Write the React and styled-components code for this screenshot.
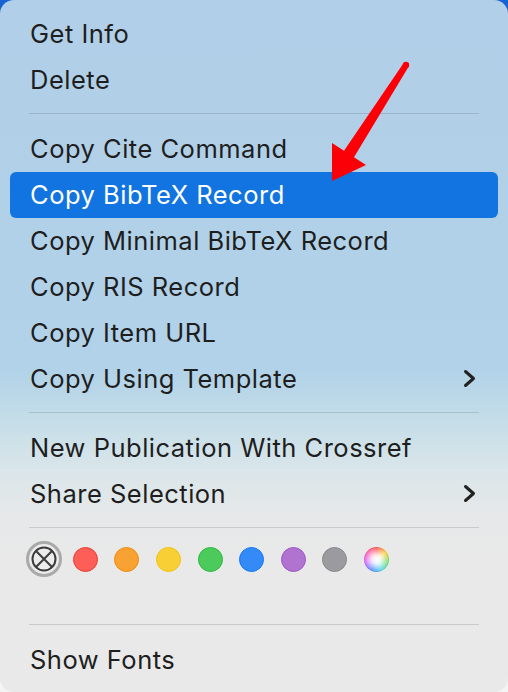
import styled, { createGlobalStyle } from "styled-components";

const GlobalStyle = createGlobalStyle`
  html, body {
    margin: 0;
    padding: 0;
  }
  body {
    width: 508px;
    height: 692px;
    overflow: hidden;
    background: linear-gradient(180deg, #1762d2 0%, #1762d2 50%, #f4f4f4 50%, #f4f4f4 100%);
    font-family: Inter, "Liberation Sans", Arial, sans-serif;
  }
`;

const Menu = styled.div`
  position: relative;
  box-sizing: border-box;
  width: 508px;
  height: 692px;
  padding: 11px 10px 0;
  border-radius: 14px;
  overflow: hidden;
  background: linear-gradient(
    180deg,
    #b1cfe8 0px,
    #b1d2e8 370px,
    #c4dde8 420px,
    #dae6ea 470px,
    #e6e8e9 515px,
    #e9e9e9 560px,
    #e9e9e9 100%
  );
`;

const Item = styled.div`
  height: 46px;
  display: flex;
  align-items: center;
  justify-content: space-between;
  padding: 0 22px 2px 20px;
  box-sizing: border-box;
  border-radius: 6px;
  font-size: 25.5px;
  letter-spacing: 0.5px;
  color: ${(p) => (p.$active ? "#ffffff" : "#1e1e1e")};
  background: ${(p) => (p.$active ? "#1174e0" : "transparent")};
`;

const Separator = styled.div`
  height: 1px;
  margin: 10px 19px 12px;
  background: rgba(0, 0, 0, 0.13);
`;

const SwatchRow = styled.div`
  display: flex;
  align-items: center;
  gap: 5.6px;
  padding: 1px 0 37px 15.7px;
`;

const Cell = styled.div`
  width: 36px;
  height: 36px;
  display: flex;
  align-items: center;
  justify-content: center;
`;

const Swatch = styled.div`
  box-sizing: border-box;
  width: 25px;
  height: 25px;
  border-radius: 50%;
  background: ${(p) => p.$fill};
  border: 1.5px solid ${(p) => p.$edge};
`;

const Rainbow = styled.div`
  width: 25px;
  height: 25px;
  border-radius: 50%;
  background: radial-gradient(circle, #ffffff 0%, rgba(255, 255, 255, 0.85) 25%, rgba(255, 255, 255, 0) 70%),
    conic-gradient(#ff5a5a, #ffcf3a, #7ee07a, #4fd7e8, #5a8cff, #d86bff, #ff5fb0, #ff5a5a);
  box-shadow: inset 0 0 0 1px rgba(0, 0, 0, 0.08);
`;

const NoneRing = styled.div`
  box-sizing: border-box;
  width: 36px;
  height: 36px;
  border-radius: 50%;
  border: 3px solid #a9a9a9;
  background: #ececec;
  display: flex;
  align-items: center;
  justify-content: center;
`;

const Chevron = () => (
  <svg width="13" height="19" viewBox="0 0 13 19">
    <path
      d="M2.5 2.5 L10.5 9.5 L2.5 16.5"
      fill="none"
      stroke="#222"
      strokeWidth="3"
      strokeLinecap="round"
      strokeLinejoin="round"
    />
  </svg>
);

const Pointer = styled.svg`
  position: absolute;
  left: 0;
  top: 0;
  pointer-events: none;
`;

const colors = [
  ["#fd5e57", "#ea3d35"],
  ["#f8a234", "#f08c0a"],
  ["#f8cf35", "#f2c30f"],
  ["#4ccb5c", "#28ba3c"],
  ["#348af7", "#1677f2"],
  ["#b073d0", "#9c58c4"],
  ["#9b9a9f", "#88878c"],
];

const App = () => {
  return (
    <>
      <GlobalStyle />
      <Menu>
        <Item>Get Info</Item>
        <Item>Delete</Item>
        <Separator />
        <Item>Copy Cite Command</Item>
        <Item $active>Copy BibTeX Record</Item>
        <Item>Copy Minimal BibTeX Record</Item>
        <Item>Copy RIS Record</Item>
        <Item>Copy Item URL</Item>
        <Item>
          Copy Using Template
          <Chevron />
        </Item>
        <Separator />
        <Item>New Publication With Crossref</Item>
        <Item>
          Share Selection
          <Chevron />
        </Item>
        <Separator />
        <SwatchRow>
          <Cell>
            <NoneRing>
              <svg width="26" height="26" viewBox="0 0 26 26">
                <circle cx="13" cy="13" r="11.5" fill="none" stroke="#3c3c3c" strokeWidth="2" />
                <path d="M5 5 L21 21 M21 5 L5 21" stroke="#3c3c3c" strokeWidth="2" />
              </svg>
            </NoneRing>
          </Cell>
          {colors.map(([fill, edge]) => (
            <Cell key={fill}>
              <Swatch $fill={fill} $edge={edge} />
            </Cell>
          ))}
          <Cell>
            <Rainbow />
          </Cell>
        </SwatchRow>
        <Separator />
        <Item>Show Fonts</Item>
        <Pointer width="508" height="692" viewBox="0 0 508 692">
          <circle cx="406" cy="65" r="3.2" fill="#fb0007" />
          <path
            d="M403.3 63.4 L344 150.8 L332 143 L332 181 L366 165 L354 157.2 L408.7 66.6 Z"
            fill="#fb0007"
          />
        </Pointer>
      </Menu>
    </>
  );
};

export default App;
